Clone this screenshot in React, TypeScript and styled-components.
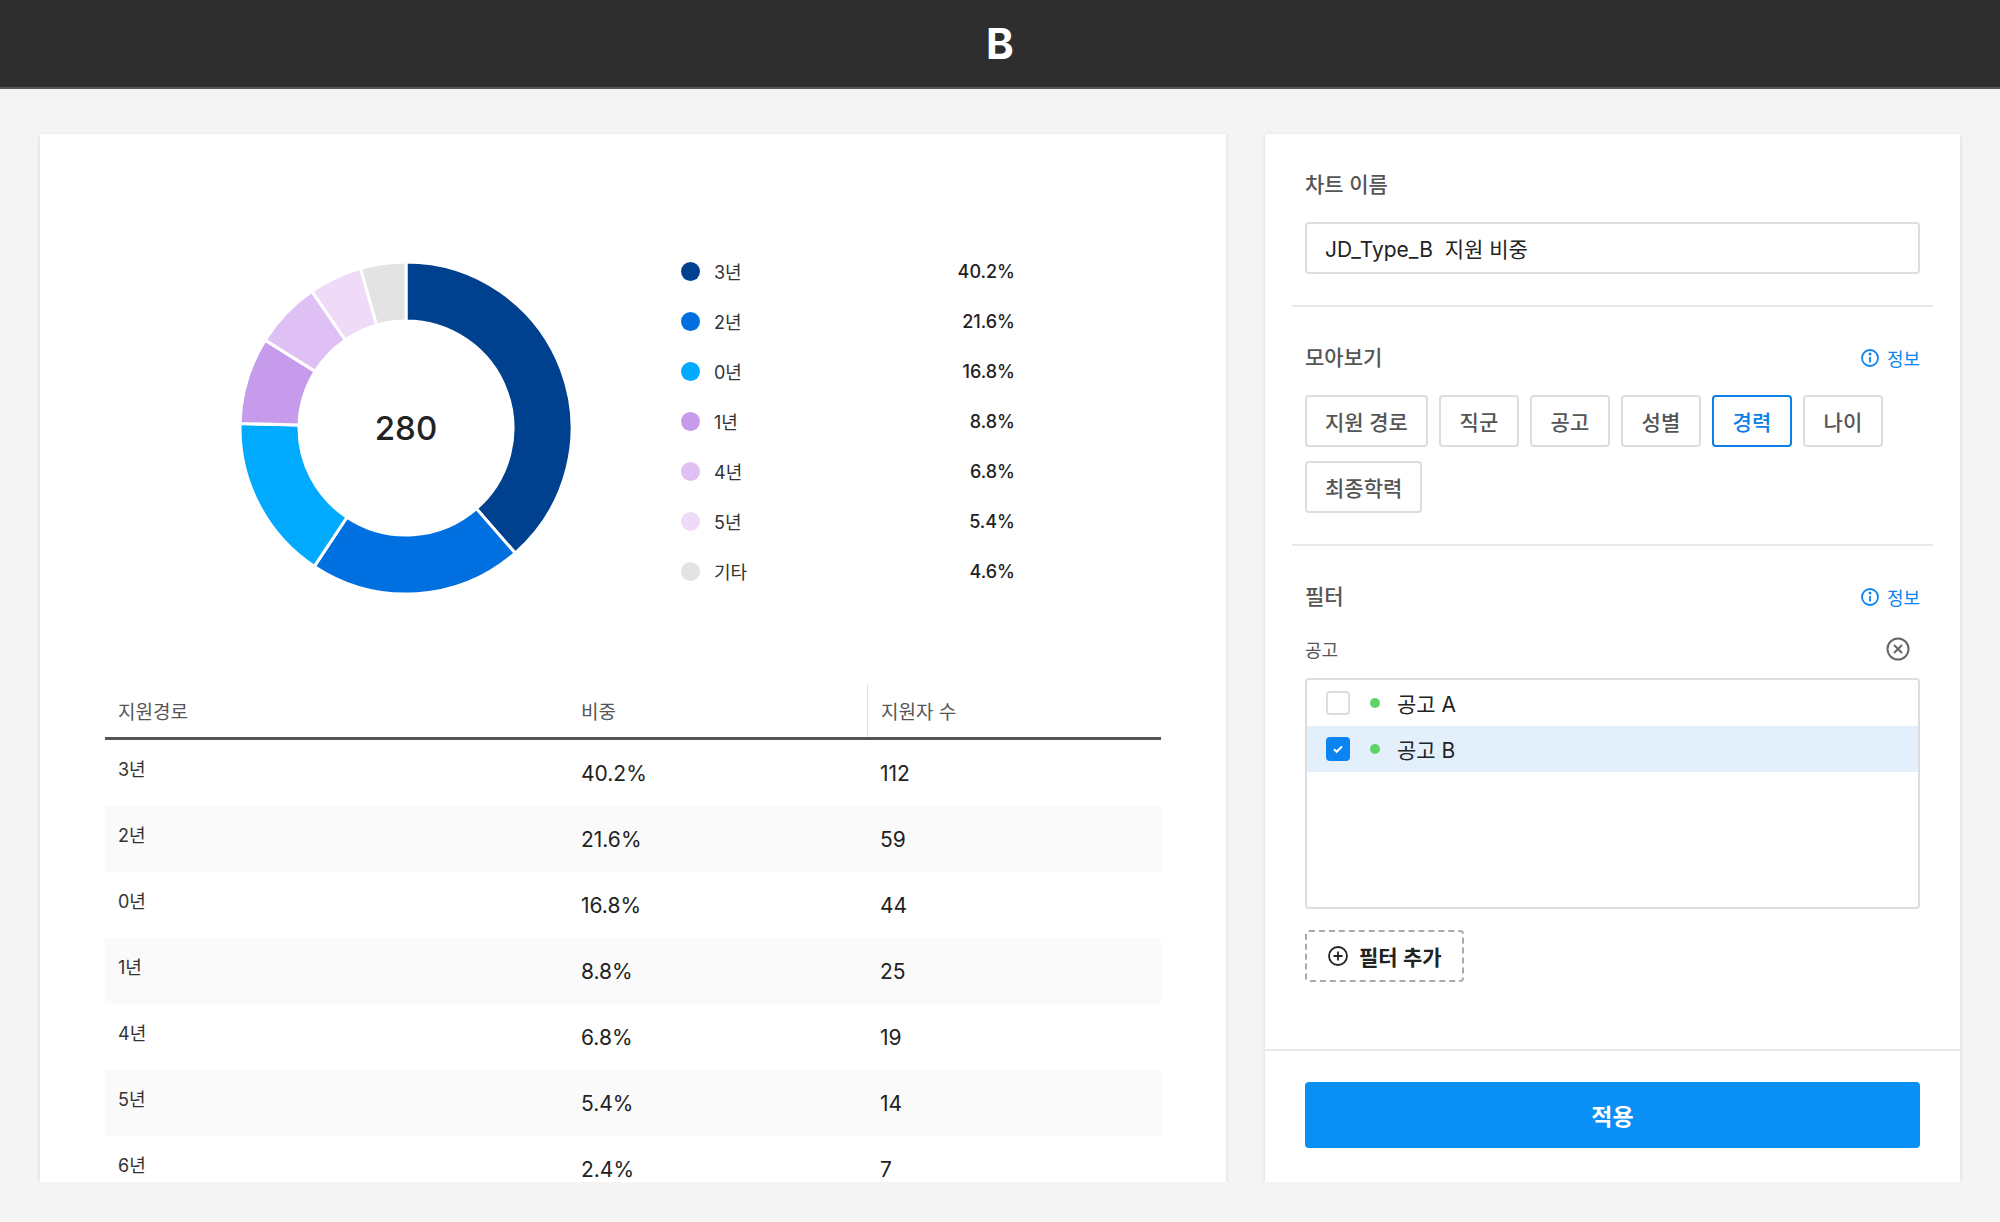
import styled, { createGlobalStyle } from 'styled-components';

const GlobalStyle = createGlobalStyle`
  body {
    margin: 0;
    background: #f4f4f4;
    font-family: "Inter", "Noto Sans CJK KR", sans-serif;
    color: #222;
  }
  * { box-sizing: border-box; }
`;

const data = [
  { label: '3년', pct: 40.2, count: 112, color: '#00418f' },
  { label: '2년', pct: 21.6, count: 59, color: '#0070e0' },
  { label: '0년', pct: 16.8, count: 44, color: '#00aaff' },
  { label: '1년', pct: 8.8, count: 25, color: '#c79bec' },
  { label: '4년', pct: 6.8, count: 19, color: '#dec0f5' },
  { label: '5년', pct: 5.4, count: 14, color: '#efdaf8' },
  { label: '기타', pct: 4.6, count: 0, color: '#e3e3e3' },
];

const tableRows = [
  ['3년', '40.2%', '112'],
  ['2년', '21.6%', '59'],
  ['0년', '16.8%', '44'],
  ['1년', '8.8%', '25'],
  ['4년', '6.8%', '19'],
  ['5년', '5.4%', '14'],
  ['6년', '2.4%', '7'],
];

const groups = ['지원 경로', '직군', '공고', '성별', '경력', '나이', '최종학력'];

function Donut() {
  const cx = 170, cy = 170, R = 166, r = 107;
  const total = data.reduce((s, d) => s + d.pct, 0);
  let acc = 0;
  const pt = (a: number, rad: number) => [cx + rad * Math.sin(a), cy - rad * Math.cos(a)];
  return (
    <svg width={340} height={340} viewBox="0 0 340 340">
      {data.map((d) => {
        const a0 = (acc / total) * Math.PI * 2;
        acc += d.pct;
        const a1 = (acc / total) * Math.PI * 2;
        const large = a1 - a0 > Math.PI ? 1 : 0;
        const [x0, y0] = pt(a0, R);
        const [x1, y1] = pt(a1, R);
        const [x2, y2] = pt(a1, r);
        const [x3, y3] = pt(a0, r);
        return (
          <path
            key={d.label}
            d={`M${x0} ${y0} A${R} ${R} 0 ${large} 1 ${x1} ${y1} L${x2} ${y2} A${r} ${r} 0 ${large} 0 ${x3} ${y3} Z`}
            fill={d.color}
            stroke="#fff"
            strokeWidth={3}
            strokeLinejoin="round"
          />
        );
      })}
      <text x={cx} y={cy + 12} textAnchor="middle" fontSize="33" fontWeight="500" fill="#222" fontFamily="Inter, sans-serif">
        280
      </text>
    </svg>
  );
}

const InfoIcon = () => (
  <svg width="20" height="20" viewBox="0 0 20 20" fill="none" stroke="#0a84f0" strokeWidth="1.8">
    <circle cx="10" cy="10" r="8" />
    <line x1="10" y1="9" x2="10" y2="14.5" />
    <circle cx="10" cy="6" r="0.6" fill="#0a84f0" />
  </svg>
);

export default function App() {
  return (
    <>
      <GlobalStyle />
      <Header>B</Header>
      <Main>
        <ChartCard>
          <ChartRow>
            <Donut />
            <Legend>
              {data.map((d) => (
                <LegendItem key={d.label}>
                  <Dot $color={d.color} />
                  <LegendLabel>{d.label}</LegendLabel>
                  <LegendValue>{d.pct}%</LegendValue>
                </LegendItem>
              ))}
            </Legend>
          </ChartRow>
          <Table>
            <HeadRow>
              <HeadCell>지원경로</HeadCell>
              <HeadCell>비중</HeadCell>
              <HeadCell $divider>지원자 수</HeadCell>
            </HeadRow>
            {tableRows.map((row, i) => (
              <BodyRow key={row[0]} $striped={i % 2 === 1}>
                <LabelCell>{row[0]}</LabelCell>
                <ValueCell>{row[1]}</ValueCell>
                <ValueCell>{row[2]}</ValueCell>
              </BodyRow>
            ))}
          </Table>
        </ChartCard>

        <SideCard>
          <SideBody>
            <Section>
              <SectionTitle>차트 이름</SectionTitle>
              <Input defaultValue="JD_Type_B  지원 비중" />
            </Section>
            <Divider />
            <Section>
              <TitleRow>
                <SectionTitle>모아보기</SectionTitle>
                <InfoLink><InfoIcon />정보</InfoLink>
              </TitleRow>
              <Chips>
                {groups.map((g) => (
                  <Chip key={g} $active={g === '경력'}>{g}</Chip>
                ))}
              </Chips>
            </Section>
            <Divider />
            <Section>
              <TitleRow>
                <SectionTitle>필터</SectionTitle>
                <InfoLink><InfoIcon />정보</InfoLink>
              </TitleRow>
              <FilterHead>
                <span>공고</span>
                <svg width="26" height="26" viewBox="0 0 26 26" fill="none" stroke="#666" strokeWidth="2">
                  <circle cx="13" cy="13" r="10.5" />
                  <path d="M9 9l8 8M17 9l-8 8" />
                </svg>
              </FilterHead>
              <ListBox>
                <ListItem>
                  <Check />
                  <GreenDot />
                  공고 A
                </ListItem>
                <ListItem $selected>
                  <Check $checked>
                    <svg width="14" height="14" viewBox="0 0 14 14" fill="none" stroke="#fff" strokeWidth="2">
                      <path d="M3 7.2l2.6 2.6L11 4.5" />
                    </svg>
                  </Check>
                  <GreenDot />
                  공고 B
                </ListItem>
              </ListBox>
              <AddButton>
                <svg width="22" height="22" viewBox="0 0 22 22" fill="none" stroke="#222" strokeWidth="1.8">
                  <circle cx="11" cy="11" r="9" />
                  <path d="M11 6.5v9M6.5 11h9" />
                </svg>
                필터 추가
              </AddButton>
            </Section>
          </SideBody>
          <Footer>
            <ApplyButton>적용</ApplyButton>
          </Footer>
        </SideCard>
      </Main>
    </>
  );
}

const Header = styled.header`
  height: 89px;
  background: #2e2e2e;
  color: #fff;
  display: flex;
  align-items: center;
  justify-content: center;
  font-size: 42px;
  font-weight: 700;
  border-bottom: 2px solid #555;
`;

const Main = styled.main`
  display: flex;
  gap: 39px;
  padding: 45px 40px 0 40px;
`;

const ChartCard = styled.section`
  width: 1186px;
  height: 1048px;
  background: #fff;
  box-shadow: 0 1px 4px rgba(0, 0, 0, 0.12);
  overflow: hidden;
  padding: 124px 65px 0;
`;

const ChartRow = styled.div`
  display: flex;
  align-items: flex-start;
  padding-left: 131px;
`;

const Legend = styled.ul`
  list-style: none;
  margin: 0 0 0 105px;
  padding: 0;
  width: 334px;
  display: flex;
  flex-direction: column;
  gap: 24px;
`;

const LegendItem = styled.li`
  display: flex;
  align-items: center;
  height: 26px;
  font-size: 18px;
`;

const Dot = styled.span<{ $color: string }>`
  width: 19px;
  height: 19px;
  border-radius: 50%;
  background: ${(p) => p.$color};
  margin-right: 14px;
`;

const LegendLabel = styled.span`
  color: #333;
  flex: 1;
`;

const LegendValue = styled.span`
  font-weight: 500;
  color: #222;
`;

const Table = styled.div`
  margin-top: 86px;
`;

const HeadRow = styled.div`
  display: grid;
  grid-template-columns: 463px 299px 1fr;
  height: 56px;
  align-items: center;
  border-bottom: 3px solid #555;
`;

const HeadCell = styled.div<{ $divider?: boolean }>`
  font-size: 19px;
  color: #555;
  padding-left: 13px;
  height: 100%;
  display: flex;
  align-items: center;
  border-left: ${(p) => (p.$divider ? '1px solid #e2e2e2' : 'none')};
`;

const BodyRow = styled.div<{ $striped: boolean }>`
  display: grid;
  grid-template-columns: 463px 299px 1fr;
  height: 66px;
  align-items: center;
  background: ${(p) => (p.$striped ? '#fafafa' : '#fff')};
`;

const LabelCell = styled.div`
  font-size: 18px;
  color: #333;
  padding-left: 13px;
  margin-top: -10px;
`;

const ValueCell = styled.div`
  font-size: 21px;
  color: #222;
  padding-left: 13px;
`;

const SideCard = styled.aside`
  width: 695px;
  height: 1048px;
  background: #fff;
  box-shadow: 0 1px 4px rgba(0, 0, 0, 0.12);
  display: flex;
  flex-direction: column;
`;

const SideBody = styled.div`
  flex: 1;
  padding: 0 27px;
`;

const Section = styled.div`
  padding: 36px 13px 31px;
`;

const TitleRow = styled.div`
  display: flex;
  justify-content: space-between;
  align-items: center;
`;

const SectionTitle = styled.h3`
  margin: 0;
  font-size: 21px;
  font-weight: 500;
  color: #555;
  line-height: 30px;
`;

const InfoLink = styled.span`
  display: flex;
  align-items: center;
  gap: 7px;
  color: #0a84f0;
  font-size: 18px;
`;

const Input = styled.input`
  margin-top: 22px;
  width: 100%;
  height: 52px;
  border: 2px solid #ddd;
  border-radius: 4px;
  padding: 0 18px;
  font-family: inherit;
  font-size: 21px;
  color: #222;
  white-space: pre;
`;

const Divider = styled.hr`
  margin: 0;
  border: none;
  border-top: 2px solid #e8e8e8;
`;

const Chips = styled.div`
  display: flex;
  flex-wrap: wrap;
  gap: 14px 11px;
  margin-top: 22px;
`;

const Chip = styled.button<{ $active?: boolean }>`
  height: 52px;
  padding: 0 18px;
  min-width: 80px;
  background: #fff;
  border: 2px solid ${(p) => (p.$active ? '#0a7fe8' : '#ddd')};
  color: ${(p) => (p.$active ? '#0a7fe8' : '#555')};
  border-radius: 4px;
  font-family: inherit;
  font-size: 21px;
  font-weight: 500;
`;

const FilterHead = styled.div`
  display: flex;
  justify-content: space-between;
  align-items: center;
  margin-top: 24px;
  padding-right: 9px;
  font-size: 18px;
  color: #555;
`;

const ListBox = styled.div`
  margin-top: 16px;
  height: 231px;
  border: 2px solid #ddd;
  border-radius: 4px;
`;

const ListItem = styled.div<{ $selected?: boolean }>`
  height: 46px;
  display: flex;
  align-items: center;
  padding-left: 19px;
  font-size: 21px;
  color: #222;
  background: ${(p) => (p.$selected ? '#e3f0fc' : 'transparent')};
`;

const Check = styled.span<{ $checked?: boolean }>`
  width: 24px;
  height: 24px;
  border-radius: 4px;
  border: ${(p) => (p.$checked ? 'none' : '2px solid #ddd')};
  background: ${(p) => (p.$checked ? '#0a84f0' : '#fff')};
  display: flex;
  align-items: center;
  justify-content: center;
`;

const GreenDot = styled.span`
  width: 10px;
  height: 10px;
  border-radius: 50%;
  background: #5fd36a;
  margin: 0 17px 0 20px;
`;

const AddButton = styled.button`
  margin-top: 21px;
  height: 52px;
  padding: 0 20px;
  display: flex;
  align-items: center;
  gap: 10px;
  background: #fff;
  border: 2px dashed #aaa;
  border-radius: 4px;
  font-family: inherit;
  font-size: 21px;
  font-weight: 600;
  color: #222;
`;

const Footer = styled.div`
  border-top: 2px solid #e8e8e8;
  padding: 31px 40px 34px;
`;

const ApplyButton = styled.button`
  width: 100%;
  height: 66px;
  border: none;
  border-radius: 4px;
  background: #0a8ff5;
  color: #fff;
  font-family: inherit;
  font-size: 23px;
  font-weight: 600;
`;
